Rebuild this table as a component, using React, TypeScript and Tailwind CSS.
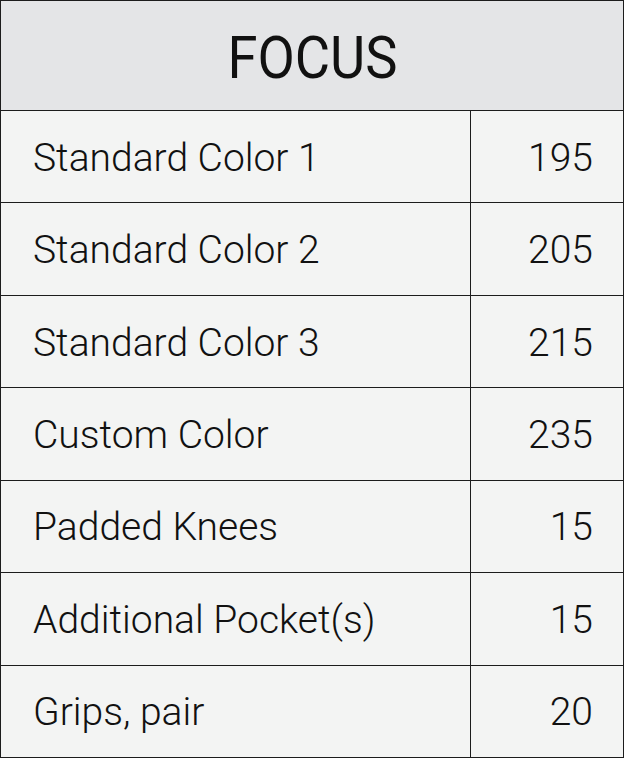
import React from "react";

const rows = [
  { name: "Standard Color 1", price: "195" },
  { name: "Standard Color 2", price: "205" },
  { name: "Standard Color 3", price: "215" },
  { name: "Custom Color", price: "235" },
  { name: "Padded Knees", price: "15" },
  { name: "Additional Pocket(s)", price: "15" },
  { name: "Grips, pair", price: "20" },
];

const App = () => {
  return (
    <div className="w-[625px] h-[759px] bg-white">
      <div className="w-[624px] h-[758px] flex flex-col border border-[#1c1c1c] bg-[#f3f4f3] font-['Roboto',sans-serif] font-light text-[#111]">
        <div className="h-[110px] shrink-0 flex items-center justify-center bg-[#e4e5e7] border-b border-[#1c1c1c]">
          <span className="inline-block scale-x-[0.92] text-[59px] font-normal leading-none mt-1">
            FOCUS
          </span>
        </div>
        {rows.map((row, i) => (
          <div
            key={row.name}
            className={
              "flex-1 grid grid-cols-[470px_1fr] " +
              (i < rows.length - 1 ? "border-b border-[#1c1c1c]" : "")
            }
          >
            <div className="flex items-center pl-[32px] pt-[3px] border-r border-[#1c1c1c] text-[39px] leading-none">
              {row.name}
            </div>
            <div className="flex items-center justify-end pr-[30px] pt-[3px] text-[39px] leading-none">
              {row.price}
            </div>
          </div>
        ))}
      </div>
    </div>
  );
};

export default App;
